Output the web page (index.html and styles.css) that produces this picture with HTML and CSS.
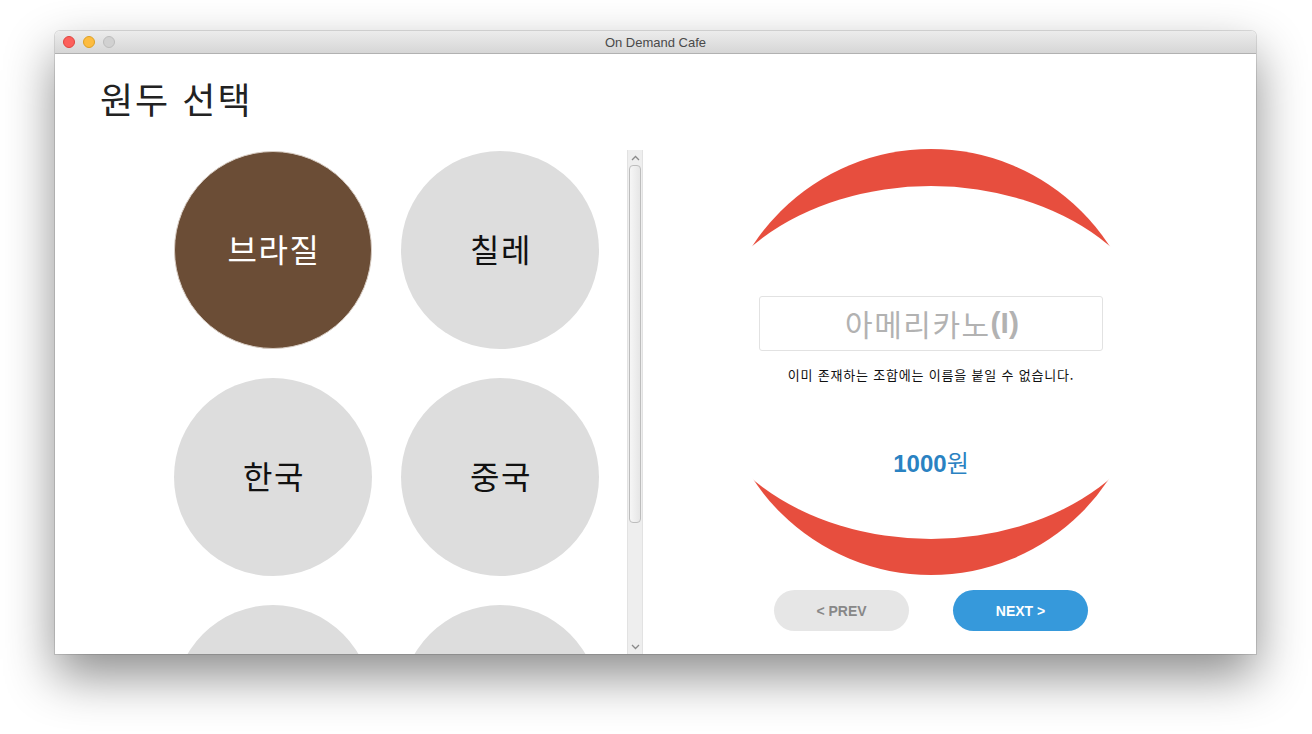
FILE: index.html
```html
<!DOCTYPE html>
<html lang="ko">
<head>
<meta charset="utf-8">
<title>On Demand Cafe</title>
<link rel="stylesheet" href="styles.css">
</head>
<body>
<div class="window">
  <div class="titlebar">
    <div class="lights">
      <span class="light red"></span>
      <span class="light yellow"></span>
      <span class="light grey"></span>
    </div>
    <div class="title">On Demand Cafe</div>
    <div></div>
  </div>
  <div class="content">
    <h1 class="heading">원두 선택</h1>
    <div class="main">
      <div class="picker">
        <div class="grid">
          <div class="bean selected">브라질</div>
          <div class="bean">칠레</div>
          <div class="bean">한국</div>
          <div class="bean">중국</div>
          <div class="bean"></div>
          <div class="bean"></div>
        </div>
        <div class="scrollbar">
          <div class="arrow">
            <svg width="9" height="6" viewBox="0 0 9 6"><polyline points="1,5 4.5,1.5 8,5" fill="none" stroke="#8a8a8a" stroke-width="1.3"/></svg>
          </div>
          <div class="thumb"></div>
          <div class="track-rest"></div>
          <div class="arrow">
            <svg width="9" height="6" viewBox="0 0 9 6"><polyline points="1,1 4.5,4.5 8,1" fill="none" stroke="#8a8a8a" stroke-width="1.3"/></svg>
          </div>
        </div>
      </div>
      <div class="detail">
        <div class="ring">
          <div class="face">
            <div class="name-box">아메리카노<span class="latin">(I)</span></div>
            <p class="message">이미 존재하는 조합에는 이름을 붙일 수 없습니다.</p>
            <p class="price"><span class="amount">1000</span>원</p>
          </div>
        </div>
        <div class="buttons">
          <button class="btn prev">&lt; PREV</button>
          <button class="btn next">NEXT &gt;</button>
        </div>
      </div>
    </div>
  </div>
</div>
</body>
</html>
```
FILE: styles.css
```css
html, body {
  margin: 0;
  padding: 0;
  background: #ffffff;
}
body {
  width: 1312px;
  height: 734px;
  overflow: hidden;
  font-family: "Liberation Sans", "Noto Sans CJK KR", sans-serif;
}
.window {
  margin: 31px 0 0 55px;
  width: 1201px;
  border-radius: 5px 5px 0 0;
  background: #ffffff;
  box-shadow: 0 22px 50px rgba(0, 0, 0, 0.45), 0 0 0 1px rgba(0, 0, 0, 0.12);
}
.titlebar {
  height: 22px;
  display: grid;
  grid-template-columns: 1fr auto 1fr;
  align-items: center;
  background: linear-gradient(#ececec, #d6d6d6);
  border-bottom: 1px solid #b1b1b1;
  border-radius: 5px 5px 0 0;
}
.lights {
  display: flex;
  gap: 8px;
  padding-left: 8px;
}
.light {
  width: 12px;
  height: 12px;
  box-sizing: border-box;
  border-radius: 50%;
}
.red { background: #fc605c; border: 1px solid #e0443e; }
.yellow { background: #fdbc40; border: 1px solid #dea123; }
.grey { background: #d1d1d1; border: 1px solid #bdbdbd; }
.title {
  font-size: 13px;
  color: #4a4a4a;
}
.content {
  height: 600px;
  overflow: hidden;
}
.heading {
  margin: 0;
  padding: 26px 0 0 45px;
  height: 36px;
  margin-bottom: 34px;
  font-family: "Noto Sans CJK KR", sans-serif;
  font-weight: 400;
  font-size: 36px;
  line-height: 36px;
  letter-spacing: 2px;
  color: #222222;
}
.main {
  display: flex;
  height: 504px;
}
.picker {
  width: 588px;
  flex: none;
  display: flex;
  padding-left: 119px;
  box-sizing: border-box;
}
.grid {
  display: grid;
  grid-template-columns: 198px 198px;
  grid-auto-rows: 198px;
  gap: 29px;
  padding-top: 1px;
  height: 504px;
  box-sizing: border-box;
  overflow: hidden;
}
.bean {
  border-radius: 50%;
  background: #dddddd;
  display: flex;
  align-items: center;
  justify-content: center;
  padding: 0 0 5px 2px;
  box-sizing: border-box;
  font-family: "Noto Sans CJK KR", sans-serif;
  font-size: 32px;
  letter-spacing: 1.5px;
  color: #111111;
}
.bean.selected {
  background: #6b4d36;
  color: #ffffff;
  border: 1px solid #d8cdc4;
}
.scrollbar {
  margin-left: auto;
  width: 16px;
  height: 504px;
  box-sizing: border-box;
  display: flex;
  flex-direction: column;
  align-items: center;
  background: #eeeeee;
  border-left: 1px solid #e2e2e2;
  border-right: 1px solid #e2e2e2;
}
.arrow {
  height: 15px;
  width: 100%;
  display: flex;
  align-items: center;
  justify-content: center;
}
.thumb {
  width: 12px;
  height: 358px;
  box-sizing: border-box;
  border: 1px solid #bdbdbd;
  border-radius: 4px;
  background: linear-gradient(90deg, #f6f6f6, #e6e6e6);
}
.track-rest {
  flex: 1;
}
.detail {
  margin-left: 75px;
  margin-top: -1px;
  width: 426px;
  display: flex;
  flex-direction: column;
  align-items: center;
}
.ring {
  width: 426px;
  height: 426px;
  border-radius: 50%;
  background: #e74e3e;
  display: flex;
  align-items: center;
  justify-content: center;
}
.face {
  flex: none;
  width: 476px;
  height: 353px;
  border-radius: 50%;
  background: #ffffff;
  display: flex;
  flex-direction: column;
  align-items: center;
  padding-top: 110px;
  box-sizing: border-box;
}
.name-box {
  width: 344px;
  height: 55px;
  box-sizing: border-box;
  border: 1px solid #e2e2e2;
  border-radius: 3px;
  display: flex;
  align-items: center;
  justify-content: center;
  padding-left: 2px;
  font-family: "Noto Sans CJK KR", sans-serif;
  font-size: 30px;
  letter-spacing: 1.5px;
  color: #b2b2b2;
}
.latin {
  font-family: "Liberation Sans", sans-serif;
  font-weight: 700;
  letter-spacing: 0;
}
.message {
  margin: 16px 0 0;
  font-family: "Noto Sans CJK KR", sans-serif;
  font-size: 13px;
  line-height: 16px;
  letter-spacing: 0.8px;
  color: #111111;
}
.price {
  margin: 67px 0 0;
  font-size: 24px;
  line-height: 28px;
  color: #2a82c2;
}
.amount {
  font-weight: 700;
}
.buttons {
  margin-top: 15px;
  display: flex;
  gap: 44px;
}
.btn {
  width: 135px;
  height: 41px;
  border: none;
  border-radius: 21px;
  font-family: "Liberation Sans", sans-serif;
  font-weight: 700;
  font-size: 14px;
  padding: 0;
}
.prev {
  background: #e6e6e6;
  color: #888888;
}
.next {
  background: #3699db;
  color: #ffffff;
}
```
